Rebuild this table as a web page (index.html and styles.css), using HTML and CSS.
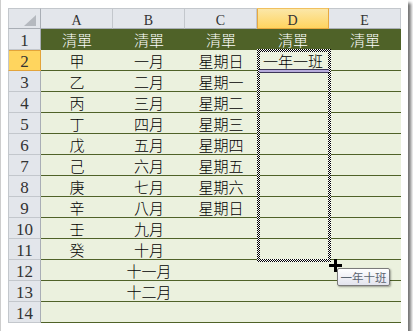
FILE: index.html
```html
<!DOCTYPE html>
<html lang="zh-Hant">
<head>
<meta charset="utf-8">
<title>清單</title>
<link rel="stylesheet" href="styles.css">
</head>
<body>
<div class="frame">
  <div class="sheet">
    <div class="corner"><span class="tri"></span></div>
    <div class="h">A</div><div class="h">B</div><div class="h">C</div><div class="h sel">D</div><div class="h">E</div>

    <div class="r">1</div><div class="c g">清單</div><div class="c g">清單</div><div class="c g">清單</div><div class="c g">清單</div><div class="c g">清單</div>
    <div class="r sel">2</div><div class="c">甲</div><div class="c">一月</div><div class="c">星期日</div><div class="c">一年一班</div><div class="c"></div>
    <div class="r">3</div><div class="c">乙</div><div class="c">二月</div><div class="c">星期一</div><div class="c"></div><div class="c"></div>
    <div class="r">4</div><div class="c">丙</div><div class="c">三月</div><div class="c">星期二</div><div class="c"></div><div class="c"></div>
    <div class="r">5</div><div class="c">丁</div><div class="c">四月</div><div class="c">星期三</div><div class="c"></div><div class="c"></div>
    <div class="r">6</div><div class="c">戊</div><div class="c">五月</div><div class="c">星期四</div><div class="c"></div><div class="c"></div>
    <div class="r">7</div><div class="c">己</div><div class="c">六月</div><div class="c">星期五</div><div class="c"></div><div class="c"></div>
    <div class="r">8</div><div class="c">庚</div><div class="c">七月</div><div class="c">星期六</div><div class="c"></div><div class="c"></div>
    <div class="r">9</div><div class="c">辛</div><div class="c">八月</div><div class="c">星期日</div><div class="c"></div><div class="c"></div>
    <div class="r">10</div><div class="c">壬</div><div class="c">九月</div><div class="c"></div><div class="c"></div><div class="c"></div>
    <div class="r">11</div><div class="c">癸</div><div class="c">十月</div><div class="c"></div><div class="c"></div><div class="c"></div>
    <div class="r">12</div><div class="c"></div><div class="c">十一月</div><div class="c"></div><div class="c"></div><div class="c"></div>
    <div class="r">13</div><div class="c"></div><div class="c">十二月</div><div class="c"></div><div class="c"></div><div class="c"></div>
    <div class="r">14</div><div class="c"></div><div class="c"></div><div class="c"></div><div class="c"></div><div class="c"></div>

    <div class="ants"></div>
    <div class="dragline"></div>
    <svg class="cursor" width="15" height="15" viewBox="0 0 15 15">
      <rect x="1" y="6" width="13" height="3" fill="#000"/>
      <rect x="6" y="1" width="3" height="13" fill="#000"/>
    </svg>
    <div class="tip">一年十班</div>
  </div>
</div>
</body>
</html>
```
FILE: styles.css
```css
html, body {
  margin: 0;
  padding: 0;
  background: #fff;
}

.frame {
  box-sizing: border-box;
  width: 408px;
  height: 331px;
  padding: 8px 0 0 7px;
  background: #fff;
  border-left: 1px solid #cdcdcd;
  box-shadow: 3px 3px 3px rgba(0, 0, 0, 0.55);
}

.sheet {
  position: relative;
  display: grid;
  grid-template-columns: 33px repeat(5, 72px);
  grid-auto-rows: 21px;
  width: 393px;
}

.sheet > div {
  box-sizing: border-box;
}

.corner {
  display: flex;
  align-items: flex-end;
  justify-content: flex-end;
  padding: 0 4px 2px 0;
  background: #e3e6eb;
  border-left: 1px solid #c3c7cc;
  border-top: 1px solid #c3c7cc;
  border-right: 1px solid #a9aeb5;
  border-bottom: 1px solid #a9aeb5;
}

.tri {
  display: block;
  width: 12px;
  height: 11px;
  background: #b5b9bf;
  clip-path: polygon(100% 0, 100% 100%, 0 100%);
}

.h {
  display: flex;
  align-items: center;
  justify-content: center;
  padding-top: 5px;
  line-height: 16px;
  background: #e3e6eb;
  border-top: 1px solid #c3c7cc;
  border-right: 1px solid #c3c7cc;
  border-bottom: 1px solid #a9aeb5;
  font-family: "Liberation Serif", serif;
  font-size: 14px;
  color: #333;
}

.h.sel {
  background: linear-gradient(#fbe7a8, #ffd45f);
  border-top-color: #f0c060;
  border-right-color: #e8a93f;
  border-bottom-color: #e8a93f;
  box-shadow: inset 1px 0 #e8a93f;
}

.r {
  display: flex;
  align-items: center;
  justify-content: center;
  padding-top: 3px;
  line-height: 20px;
  background: #e3e6eb;
  border-left: 1px solid #c3c7cc;
  border-right: 1px solid #a9aeb5;
  border-bottom: 1px solid #c3c7cc;
  font-family: "Liberation Serif", serif;
  font-size: 17px;
  color: #333;
}

.r.sel {
  background: #ffd55e;
  border-right-color: #e3a43a;
  border-bottom-color: #e3a43a;
  box-shadow: inset 0 1px #e3a43a;
}

.c {
  display: flex;
  align-items: center;
  justify-content: center;
  padding-top: 2px;
  line-height: 18px;
  background: #ebf1de;
  border-bottom: 1px solid #4f6228;
  font-family: "Noto Sans CJK TC", "Noto Sans CJK SC", sans-serif;
  font-size: 15px;
  font-weight: 300;
  color: #000;
  white-space: nowrap;
}

.c.g {
  background: #4f6228;
  color: #fff;
}

.ants {
  position: absolute;
  left: 249px;
  top: 41px;
  width: 74px;
  height: 213px;
  box-sizing: border-box;
  padding: 3px;
  background: repeating-conic-gradient(#000 0 25%, #fff 0 50%) 0 0 / 2px 2px;
  -webkit-mask: linear-gradient(#000 0 0) content-box, linear-gradient(#000 0 0);
  -webkit-mask-composite: xor;
  mask: linear-gradient(#000 0 0) content-box exclude, linear-gradient(#000 0 0);
}

.dragline {
  position: absolute;
  left: 251px;
  top: 61px;
  width: 70px;
  height: 4px;
  box-sizing: border-box;
  background: #b7acdc;
  border-top: 1px solid #3c3658;
  border-bottom: 1px solid #3c3658;
}

.cursor {
  position: absolute;
  left: 320px;
  top: 250px;
  display: block;
}

.tip {
  position: absolute;
  left: 329px;
  top: 260px;
  width: 53px;
  height: 18px;
  box-sizing: border-box;
  display: flex;
  align-items: center;
  justify-content: center;
  border: 1px solid #7a7a7a;
  border-radius: 2px;
  background: linear-gradient(#ffffff, #e3e4ee);
  box-shadow: 1px 1px 2px rgba(0, 0, 0, 0.35);
  font-family: "Noto Sans CJK TC", "Noto Sans CJK SC", sans-serif;
  font-size: 11.5px;
  line-height: 14px;
  color: #5b6570;
  white-space: nowrap;
}
```
